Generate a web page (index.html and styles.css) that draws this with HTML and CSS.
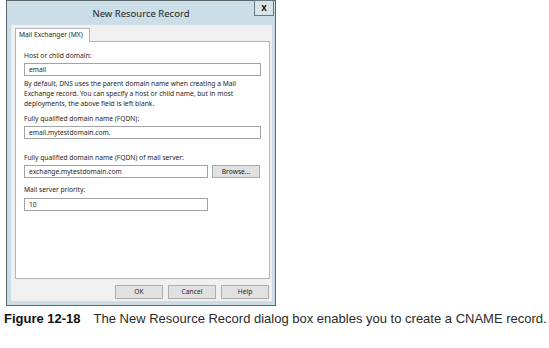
FILE: index.html
```html
<!DOCTYPE html>
<html lang="en">
<head>
    <meta charset="UTF-8">
    <title>New Resource Record</title>
    <link rel="stylesheet" href="styles.css">
</head>
<body>
    <div class="page">
        <div class="dialog">
            <div class="titlebar">
                <span class="title">New Resource Record</span>
                <span class="close">x</span>
            </div>

            <div class="client">
                <div class="tabs">
                    <div class="tab">Mail Exchanger (MX)</div>
                </div>

                <div class="panel">
                    <div class="label first">Host or child domain:</div>
                    <div class="input wide">email</div>

                    <p class="note">By default, DNS uses the parent domain name when creating a Mail<br>Exchange record. You can specify a host or child name, but in most<br>deployments, the above field is left blank.</p>

                    <div class="label fqdn">Fully qualified domain name (FQDN):</div>
                    <div class="input wide">email.mytestdomain.com.</div>

                    <div class="label server">Fully qualified domain name (FQDN) of mail server:</div>
                    <div class="input-row">
                        <div class="input short">exchange.mytestdomain.com</div>
                        <div class="button browse">Browse...</div>
                    </div>

                    <div class="label priority">Mail server priority:</div>
                    <div class="input short">10</div>
                </div>

                <div class="buttons">
                    <div class="button">OK</div>
                    <div class="button">Cancel</div>
                    <div class="button">Help</div>
                </div>
            </div>
        </div>

        <p class="caption"><b>Figure 12-18</b>The New Resource Record dialog box enables you to create a CNAME record.</p>
    </div>
</body>
</html>
```

FILE: styles.css
```css
* {
    margin: 0;
    padding: 0;
    box-sizing: border-box;
}

body {
    background-color: #fff;
    color: #1e1e1e;
    font-family: 'Noto Sans', sans-serif;
}

.page {
    padding-left: 6px;
}

/* window frame */
.dialog {
    width: 270px;
    height: 306px;
    border: 1px solid #5c676c;
    background-color: #cbdee7;
    display: flex;
    flex-direction: column;
}

.titlebar {
    height: 24px;
    display: grid;
}

.title,
.close {
    grid-area: 1 / 1;
}

.title {
    justify-self: center;
    align-self: center;
    font-size: 9.5px;
    color: #222;
}

.close {
    justify-self: end;
    width: 20px;
    height: 16px;
    margin-right: 1px;
    margin-top: -1px;
    border: 1px solid #6b777c;
    background-color: #d7e5eb;
    font-family: 'Liberation Sans', sans-serif;
    font-weight: bold;
    font-size: 10px;
    line-height: 13px;
    text-align: center;
    color: #111;
}

.client {
    flex: 1;
    margin: 0 3px 4px 4px;
    padding: 3px 2px 2px 4px;
    background-color: #f0f0f0;
    display: flex;
    flex-direction: column;
    font-size: 6.7px;
}

.tabs {
    display: flex;
}

.tab {
    width: 75px;
    height: 14px;
    margin-bottom: -1px;
    padding-left: 3px;
    border: 1px solid #b4b4b4;
    border-bottom: none;
    background-color: #fff;
    line-height: 12px;
    position: relative;
}

.panel {
    height: 238px;
    border: 1px solid #b4b4b4;
    background-color: #fff;
    padding: 0 8px;
}

.label {
    height: 10px;
    line-height: 10px;
}

.label.first { margin-top: 9px; }
.label.fqdn { margin-top: 5px; }
.label.server { margin-top: 14px; }
.label.priority { margin-top: 7px; }

.input {
    height: 13px;
    margin-top: 2px;
    padding-left: 4px;
    border: 1px solid #a3a3a3;
    background-color: #fff;
    line-height: 11px;
}

.input.wide { width: 237px; }
.input.short { width: 184px; }

.label.priority + .input { margin-top: 3px; }

.input-row {
    display: flex;
    gap: 4px;
    margin-top: 2px;
}

.input-row .input { margin-top: 0; }

.note {
    margin-top: 3px;
    line-height: 10px;
    white-space: nowrap;
}

.button {
    width: 48px;
    height: 14px;
    border: 1px solid #adadad;
    background-color: #e1e1e1;
    text-align: center;
    line-height: 12px;
}

.button.browse {
    height: 13px;
    line-height: 11px;
}

.buttons {
    display: flex;
    justify-content: flex-end;
    gap: 5px;
    margin-top: 6px;
    padding-right: 1px;
}

.caption {
    margin: 5px 0 0 -2px;
    font-family: 'Liberation Sans', Arial, sans-serif;
    font-size: 13px;
    line-height: 15px;
    color: #2a2a2a;
    white-space: nowrap;
}

.caption b {
    color: #111;
    margin-right: 13px;
}
```
